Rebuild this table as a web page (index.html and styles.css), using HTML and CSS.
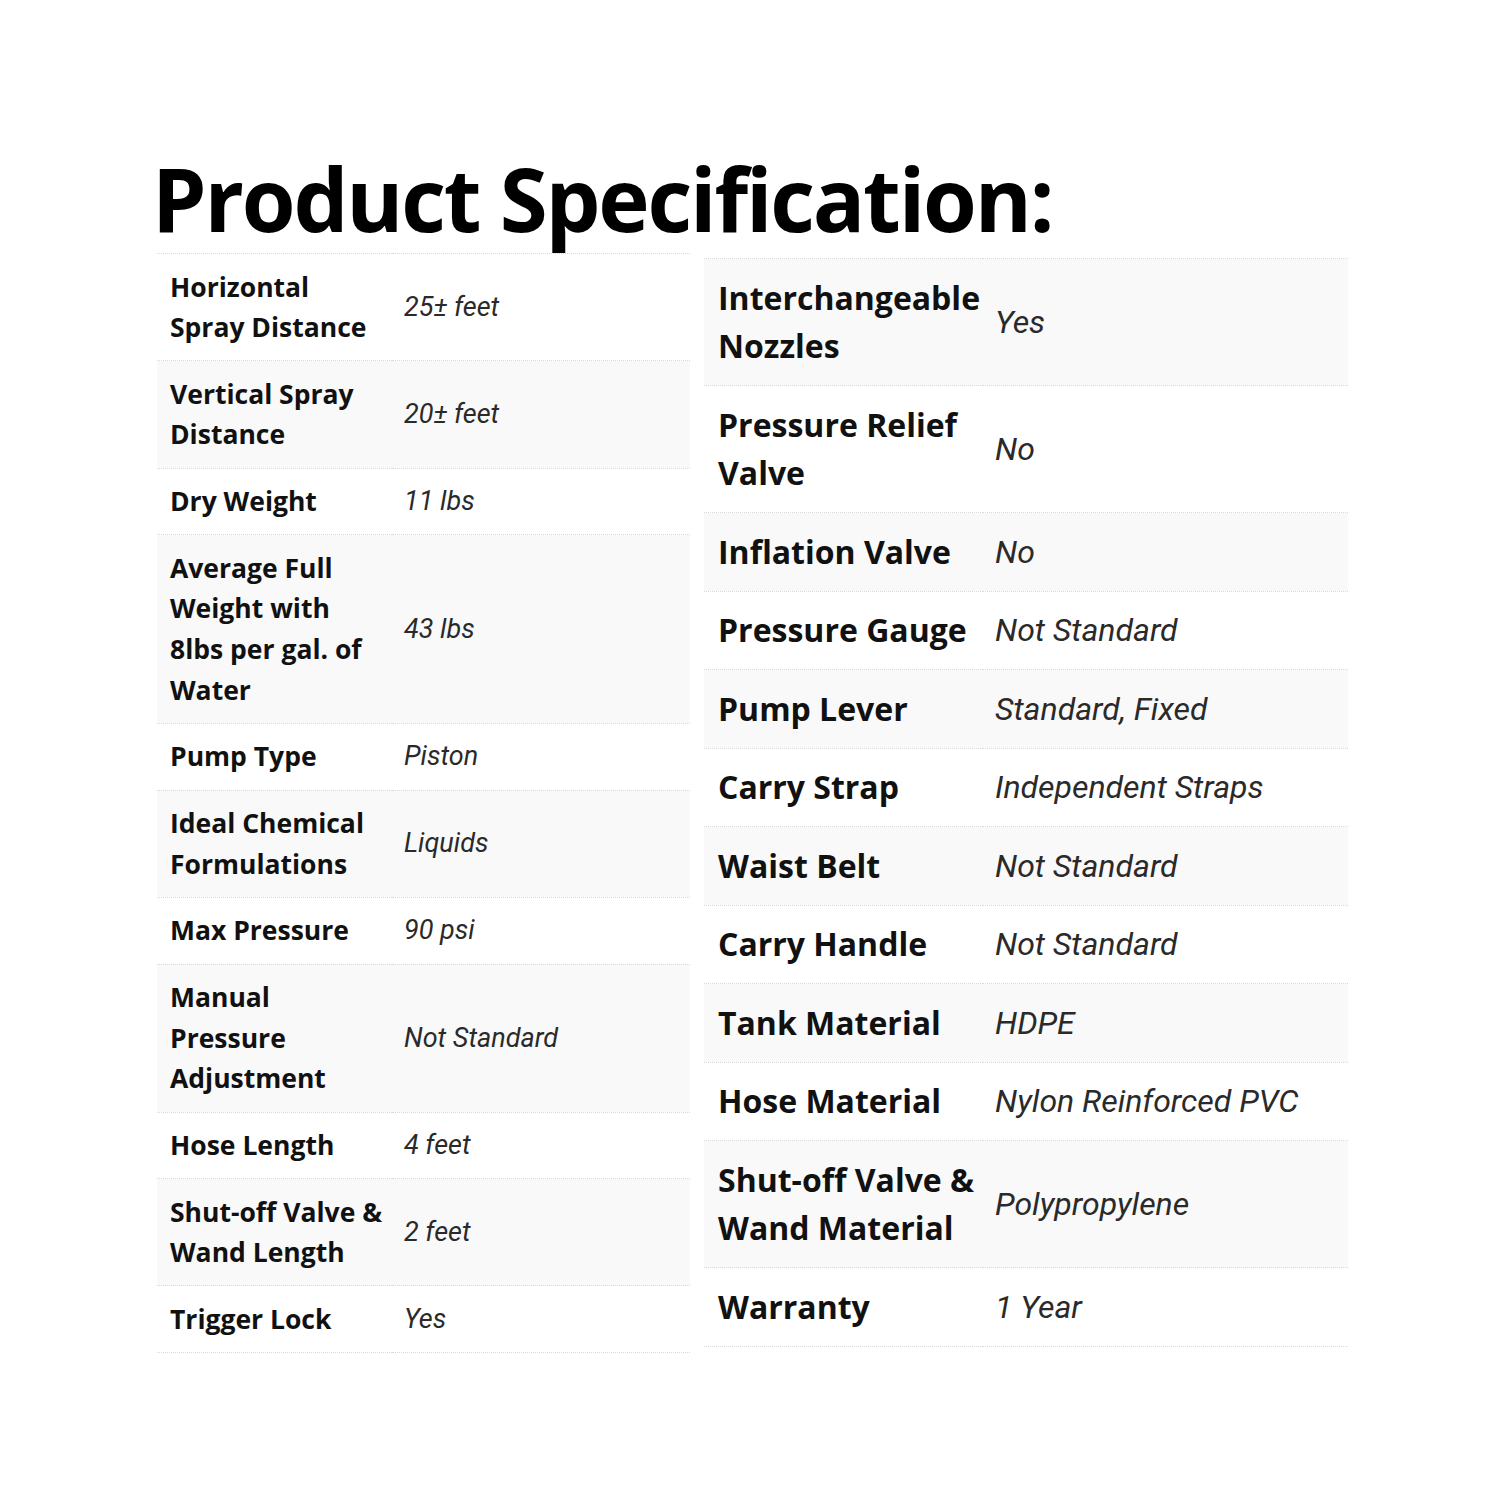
FILE: index.html
```html
<!DOCTYPE html>
<html>
<head>
<meta charset="utf-8">
<link rel="stylesheet" href="styles.css">
</head>
<body>
<div class="page">
  <h1 class="title">Product Specification:</h1>
  <div class="tables">
    <table class="spec spec-left">
      <colgroup><col class="c-label"><col></colgroup>
      <tr><th>Horizontal<br>Spray Distance</th><td>25± feet</td></tr>
      <tr class="alt"><th>Vertical Spray<br>Distance</th><td>20± feet</td></tr>
      <tr><th>Dry Weight</th><td>11 lbs</td></tr>
      <tr class="alt"><th>Average Full<br>Weight with<br>8lbs per gal. of<br>Water</th><td>43 lbs</td></tr>
      <tr><th>Pump Type</th><td>Piston</td></tr>
      <tr class="alt"><th>Ideal Chemical<br>Formulations</th><td>Liquids</td></tr>
      <tr><th>Max Pressure</th><td>90 psi</td></tr>
      <tr class="alt"><th>Manual<br>Pressure<br>Adjustment</th><td>Not Standard</td></tr>
      <tr><th>Hose Length</th><td>4 feet</td></tr>
      <tr class="alt"><th>Shut-off Valve &amp;<br>Wand Length</th><td>2 feet</td></tr>
      <tr><th>Trigger Lock</th><td>Yes</td></tr>
    </table>
    <table class="spec spec-right">
      <colgroup><col class="c-label"><col></colgroup>
      <tr class="alt"><th>Interchangeable<br>Nozzles</th><td>Yes</td></tr>
      <tr><th>Pressure Relief<br>Valve</th><td>No</td></tr>
      <tr class="alt"><th>Inflation Valve</th><td>No</td></tr>
      <tr><th>Pressure Gauge</th><td>Not Standard</td></tr>
      <tr class="alt"><th>Pump Lever</th><td>Standard, Fixed</td></tr>
      <tr><th>Carry Strap</th><td>Independent Straps</td></tr>
      <tr class="alt"><th>Waist Belt</th><td>Not Standard</td></tr>
      <tr><th>Carry Handle</th><td>Not Standard</td></tr>
      <tr class="alt"><th>Tank Material</th><td>HDPE</td></tr>
      <tr><th>Hose Material</th><td>Nylon Reinforced PVC</td></tr>
      <tr class="alt"><th>Shut-off Valve &amp;<br>Wand Material</th><td>Polypropylene</td></tr>
      <tr><th>Warranty</th><td>1 Year</td></tr>
    </table>
  </div>
</div>
</body>
</html>
```
FILE: styles.css
```css
html, body {
  margin: 0;
  padding: 0;
  background: #ffffff;
}
.page {
  width: 1500px;
  height: 1500px;
  padding: 155px 0 0 152px;
  box-sizing: border-box;
}
.title {
  margin: 0 0 11px 0;
  font-family: "Open Sans", "Liberation Sans", sans-serif;
  font-weight: 700;
  font-size: 87px;
  line-height: 1;
  color: #000;
  letter-spacing: -2.2px;
  white-space: nowrap;
}
.tables {
  display: flex;
  align-items: flex-start;
  gap: 14px;
  padding-left: 5px;
}
.spec {
  border-collapse: collapse;
  table-layout: fixed;
}
.spec tr {
  border-top: 1px dotted #d9d9d9;
}
.spec tr:last-child {
  border-bottom: 1px dotted #d9d9d9;
}
.spec tr.alt {
  background: #f9f9f9;
}
.spec th {
  text-align: left;
  font-family: "Open Sans", "Liberation Sans", sans-serif;
  font-weight: 700;
  color: #111;
  vertical-align: top;
  white-space: nowrap;
}
.spec td {
  font-family: Roboto, "Liberation Sans", sans-serif;
  font-style: italic;
  font-weight: 400;
  color: #2a2a2a;
  vertical-align: middle;
  white-space: nowrap;
}
.spec-left {
  width: 533px;
}
.spec-left .c-label {
  width: 235px;
}
.spec-left th {
  font-size: 26.5px;
  line-height: 40.65px;
  padding: 12.5px 0 12.5px 13px;
}
.spec-left td {
  font-size: 27px;
  line-height: 40.65px;
  padding: 0 12px;
}
.spec-right {
  width: 644px;
  margin-top: 5px;
}
.spec-right .c-label {
  width: 279px;
}
.spec-right th {
  font-size: 32px;
  line-height: 48.5px;
  padding: 14.5px 0 14.5px 14px;
}
.spec-right td {
  font-size: 32px;
  line-height: 48.5px;
  padding: 0 12px;
}
```
